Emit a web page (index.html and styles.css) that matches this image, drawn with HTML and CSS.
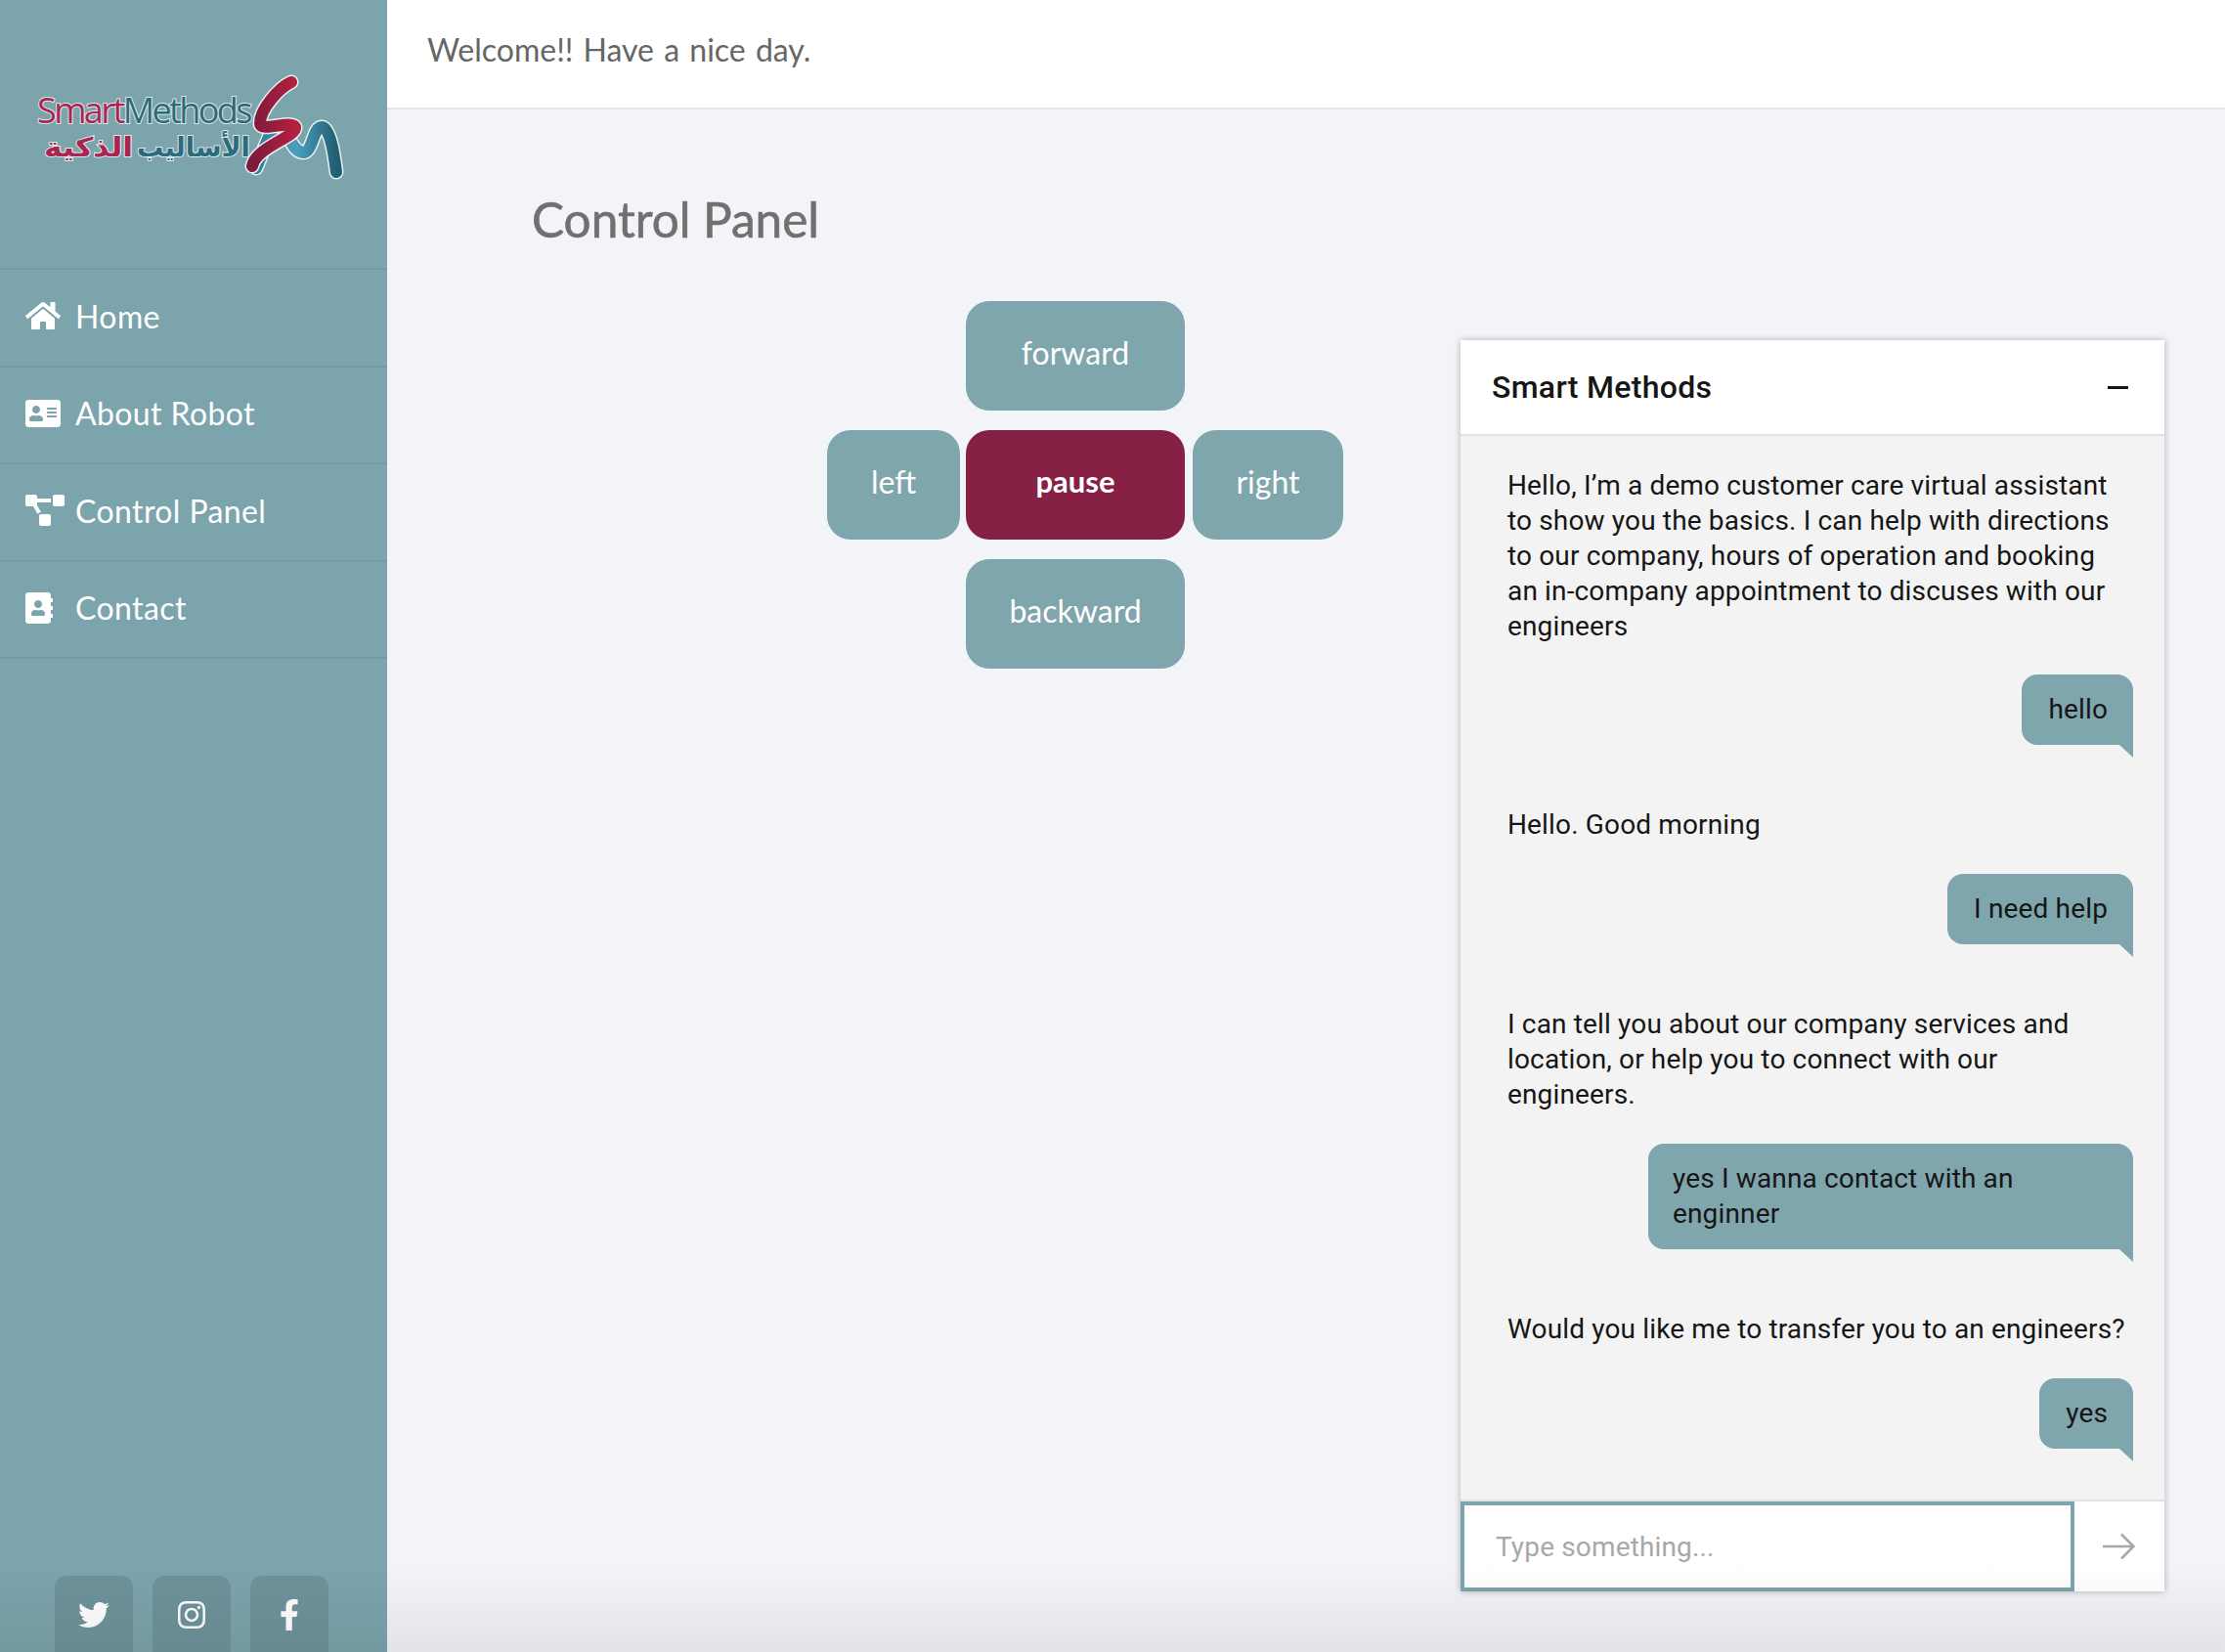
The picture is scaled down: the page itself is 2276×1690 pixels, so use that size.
FILE: index.html
```html
<!DOCTYPE html>
<html lang="en">
<head>
    <meta charset="UTF-8">
    <title>Control Panel</title>
    <link rel="stylesheet" href="styles.css">
</head>
<body>
    <div class="layout">
        <aside class="sidebar">
            <div class="logo">
                <svg width="396" height="274" viewBox="0 0 396 274">
                    <defs>
                        <linearGradient id="redRibbon" x1="0" y1="0" x2="1" y2="0">
                            <stop offset="0" stop-color="#7c1b3b"/>
                            <stop offset="1" stop-color="#b3213f"/>
                        </linearGradient>
                        <linearGradient id="tealRibbon" x1="0" y1="0" x2="1" y2="0">
                            <stop offset="0" stop-color="#2f7f9a"/>
                            <stop offset="0.5" stop-color="#4a9fbe"/>
                            <stop offset="1" stop-color="#215f73"/>
                        </linearGradient>
                    </defs>
                    <text class="logo-en" x="38" y="126"><tspan class="logo-pink">Smart</tspan><tspan class="logo-teal">Methods</tspan></text>
                    <text class="logo-ar logo-teal" x="140" y="160" text-anchor="end" direction="rtl">الأساليب</text>
                    <text class="logo-ar logo-pink" x="45" y="160" text-anchor="end" direction="rtl" textLength="91" lengthAdjust="spacingAndGlyphs">الذكية</text>
                    <path class="halo" d="M262 172 C270 155 276 130 284 130 C294 130 298 156 310 156 C320 156 320 130 329 130 C338 130 342 160 344 176"/>
                    <path class="teal" d="M262 172 C270 155 276 130 284 130 C294 130 298 156 310 156 C320 156 320 130 329 130 C338 130 342 160 344 176"/>
                    <path class="halo" d="M298 84 C285 90 266 112 266 126 C266 136 298 122 302 130 C304 140 262 150 258 170"/>
                    <path class="red" d="M298 84 C285 90 266 112 266 126 C266 136 298 122 302 130 C304 140 262 150 258 170"/>
                </svg>
            </div>

            <nav class="nav">
                <a class="nav-item" href="#">
                    <span class="nav-icon">
                        <svg width="36" height="32" viewBox="0 0 576 512"><path d="M280.37 148.26L96 300.11V464a16 16 0 0 0 16 16l112.06-.29a16 16 0 0 0 15.92-16V368a16 16 0 0 1 16-16h64a16 16 0 0 1 16 16v95.64a16 16 0 0 0 16 16.05L464 480a16 16 0 0 0 16-16V300L295.67 148.26a12.19 12.19 0 0 0-15.3 0zM571.6 251.47L488 182.56V44.05a12 12 0 0 0-12-12h-56a12 12 0 0 0-12 12v72.61L318.47 43a48 48 0 0 0-61 0L4.34 251.47a12 12 0 0 0-1.6 16.9l25.5 31A12 12 0 0 0 45.15 301l235.22-193.74a12.19 12.19 0 0 1 15.3 0L530.9 301a12 12 0 0 0 16.9-1.6l25.5-31a12 12 0 0 0-1.7-16.93z"/></svg>
                    </span>
                    Home
                </a>
                <a class="nav-item" href="#">
                    <span class="nav-icon">
                        <svg width="36" height="32" viewBox="0 0 576 512"><path d="M528 32H48C21.5 32 0 53.5 0 80v352c0 26.5 21.5 48 48 48h480c26.5 0 48-21.5 48-48V80c0-26.5-21.5-48-48-48zm-352 96c35.3 0 64 28.7 64 64s-28.7 64-64 64-64-28.7-64-64 28.7-64 64-64zm112 236.8c0 10.6-10 19.2-22.4 19.2H86.4C74 384 64 375.4 64 364.8v-19.2c0-31.8 30.1-57.6 67.2-57.6h5c12.3 5.1 25.7 8 39.8 8s27.6-2.9 39.8-8h5c37.1 0 67.2 25.8 67.2 57.6v19.2zM512 312c0 4.4-3.6 8-8 8H360c-4.4 0-8-3.6-8-8v-16c0-4.4 3.6-8 8-8h144c4.4 0 8 3.6 8 8v16zm0-64c0 4.4-3.6 8-8 8H360c-4.4 0-8-3.6-8-8v-16c0-4.4 3.6-8 8-8h144c4.4 0 8 3.6 8 8v16zm0-64c0 4.4-3.6 8-8 8H360c-4.4 0-8-3.6-8-8v-16c0-4.4 3.6-8 8-8h144c4.4 0 8 3.6 8 8v16z"/></svg>
                    </span>
                    About Robot
                </a>
                <a class="nav-item" href="#">
                    <span class="nav-icon">
                        <svg width="40" height="32" viewBox="0 0 640 512"><path d="M384 320H256c-17.67 0-32 14.33-32 32v128c0 17.67 14.33 32 32 32h128c17.67 0 32-14.33 32-32V352c0-17.67-14.33-32-32-32zM192 32c0-17.67-14.33-32-32-32H32C14.33 0 0 14.33 0 32v128c0 17.67 14.33 32 32 32h95.72l73.16 128.04C211.98 300.98 232.4 288 256 288h.28L192 175.51V128h224V64H192V32zM608 0H480c-17.67 0-32 14.33-32 32v128c0 17.67 14.33 32 32 32h128c17.67 0 32-14.33 32-32V32c0-17.67-14.33-32-32-32z"/></svg>
                    </span>
                    Control Panel
                </a>
                <a class="nav-item" href="#">
                    <span class="nav-icon">
                        <svg width="28" height="32" viewBox="0 0 448 512"><path d="M436 160c6.6 0 12-5.4 12-12v-40c0-6.6-5.4-12-12-12h-20V48c0-26.5-21.5-48-48-48H48C21.5 0 0 21.5 0 48v416c0 26.5 21.5 48 48 48h320c26.5 0 48-21.5 48-48v-48h20c6.6 0 12-5.4 12-12v-40c0-6.6-5.4-12-12-12h-20v-64h20c6.6 0 12-5.4 12-12v-40c0-6.6-5.4-12-12-12h-20v-64h20zm-228-32c35.3 0 64 28.7 64 64s-28.7 64-64 64-64-28.7-64-64 28.7-64 64-64zm112 236.8c0 10.6-10 19.2-22.4 19.2H118.4C106 384 96 375.4 96 364.8v-19.2c0-31.8 30.1-57.6 67.2-57.6h5c12.3 5.1 25.7 8 39.8 8s27.6-2.9 39.8-8h5c37.1 0 67.2 25.8 67.2 57.6v19.2z"/></svg>
                    </span>
                    Contact
                </a>
            </nav>

            <div class="social">
                <a class="social-item" href="#">
                    <svg width="32" height="32" viewBox="0 0 512 512"><path d="M459.37 151.716c.325 4.548.325 9.097.325 13.645 0 138.72-105.583 298.558-298.558 298.558-59.452 0-114.68-17.219-161.137-47.106 8.447.974 16.568 1.299 25.34 1.299 49.055 0 94.213-16.568 130.274-44.832-46.132-.975-84.792-31.188-98.112-72.772 6.498.974 12.995 1.624 19.818 1.624 9.421 0 18.843-1.3 27.614-3.573-48.081-9.747-84.143-51.98-84.143-102.985v-1.299c13.969 7.797 30.214 12.67 47.431 13.319-28.264-18.843-46.781-51.005-46.781-87.391 0-19.492 5.197-37.36 14.294-52.954 51.655 63.675 129.3 105.258 216.365 109.807-1.624-7.797-2.599-15.918-2.599-24.04 0-57.828 46.782-104.934 104.934-104.934 30.213 0 57.502 12.67 76.67 33.137 23.715-4.548 46.456-13.32 66.599-25.34-7.798 24.366-24.366 44.833-46.132 57.827 21.117-2.273 41.584-8.122 60.426-16.243-14.292 20.791-32.161 39.308-52.628 54.253z"/></svg>
                </a>
                <a class="social-item" href="#">
                    <svg width="32" height="32" viewBox="0 0 448 512"><path d="M224.1 141c-63.6 0-114.9 51.3-114.9 114.9s51.3 114.9 114.9 114.9S339 319.5 339 255.9 287.7 141 224.1 141zm0 189.6c-41.1 0-74.7-33.5-74.7-74.7s33.5-74.7 74.7-74.7 74.7 33.5 74.7 74.7-33.6 74.7-74.7 74.7zm146.4-194.3c0 14.9-12 26.8-26.8 26.8-14.9 0-26.8-12-26.8-26.8s12-26.8 26.8-26.8 26.8 12 26.8 26.8zm76.1 27.2c-1.7-35.9-9.9-67.7-36.2-93.9-26.2-26.2-58-34.4-93.9-36.2-37-2.1-147.9-2.1-184.9 0-35.8 1.7-67.6 9.9-93.9 36.1s-34.4 58-36.2 93.9c-2.1 37-2.1 147.9 0 184.9 1.7 35.9 9.9 67.7 36.2 93.9s58 34.4 93.9 36.2c37 2.1 147.9 2.1 184.9 0 35.9-1.7 67.7-9.9 93.9-36.2 26.2-26.2 34.4-58 36.2-93.9 2.1-37 2.1-147.8 0-184.8zM398.8 388c-7.8 19.6-22.9 34.7-42.6 42.6-29.5 11.7-99.5 9-132.1 9s-102.7 2.6-132.1-9c-19.6-7.8-34.7-22.9-42.6-42.6-11.7-29.5-9-99.5-9-132.1s-2.6-102.7 9-132.1c7.8-19.6 22.9-34.7 42.6-42.6 29.5-11.7 99.5-9 132.1-9s102.7-2.6 132.1 9c19.6 7.8 34.7 22.9 42.6 42.6 11.7 29.5 9 99.5 9 132.1s2.7 102.7-9 132.1z"/></svg>
                </a>
                <a class="social-item" href="#">
                    <svg width="20" height="32" viewBox="0 0 320 512"><path d="M279.14 288l14.22-92.66h-88.91v-60.13c0-25.35 12.42-50.06 52.24-50.06h40.42V6.26S260.43 0 225.36 0c-73.22 0-121.08 44.38-121.08 124.72v70.62H22.89V288h81.39v224h100.17V288z"/></svg>
                </a>
            </div>
        </aside>

        <div class="main">
            <header class="topbar">Welcome!! Have a nice day.</header>

            <section class="content">
                <h1 class="title">Control Panel</h1>

                <div class="panels">
                    <div class="pad">
                        <button class="pad-btn pad-forward">forward</button>
                        <button class="pad-btn pad-left">left</button>
                        <button class="pad-btn pad-pause">pause</button>
                        <button class="pad-btn pad-right">right</button>
                        <button class="pad-btn pad-backward">backward</button>
                    </div>

                    <div class="chat">
                        <div class="chat-head">
                            <span class="chat-title">Smart Methods</span>
                            <span class="chat-min"></span>
                        </div>
                        <div class="chat-body">
                            <p class="msg-bot">Hello, I’m a demo customer care virtual assistant<br>to show you the basics. I can help with directions<br>to our company, hours of operation and booking<br>an in-company appointment to discuses with our<br>engineers</p>
                            <p class="msg-user">hello</p>
                            <p class="msg-bot">Hello. Good morning</p>
                            <p class="msg-user">I need help</p>
                            <p class="msg-bot">I can tell you about our company services and<br>location, or help you to connect with our<br>engineers.</p>
                            <p class="msg-user msg-wide">yes I wanna contact with an<br>enginner</p>
                            <p class="msg-bot">Would you like me to transfer you to an engineers?</p>
                            <p class="msg-user">yes</p>
                        </div>
                        <div class="chat-foot">
                            <input class="chat-input" type="text" placeholder="Type something...">
                            <button class="chat-send">
                                <svg width="34" height="28" viewBox="0 0 34 28"><path d="M1 14H32M20 1.5L32.500 14L20 26.500"/></svg>
                            </button>
                        </div>
                    </div>
                </div>
            </section>
        </div>
    </div>
</body>
</html>
```

FILE: styles.css
```css
* {
    box-sizing: border-box;
}

body {
    margin: 0;
    height: 1690px;
    overflow: hidden;
    position: relative;
    font-family: 'Lato', sans-serif;
    background-color: #f3f4f8;
}

/* darker band along the bottom edge of the window */
body::after {
    content: "";
    position: absolute;
    left: 0;
    right: 0;
    bottom: 0;
    height: 90px;
    background: linear-gradient(rgba(0,0,0,0), rgba(0,0,0,0.065));
    pointer-events: none;
}

.layout {
    display: flex;
    height: 100%;
}

/* sidebar */
.sidebar {
    width: 396px;
    flex-shrink: 0;
    display: flex;
    flex-direction: column;
    background-color: #7ca4ac;
}

.logo {
    height: 274px;
}

.logo svg {
    display: block;
}

.halo,
.teal,
.red {
    fill: none;
    stroke-linecap: round;
    stroke-linejoin: round;
}

.halo {
    stroke: #e9f0f2;
    stroke-width: 15;
}

.teal {
    stroke: url(#tealRibbon);
    stroke-width: 12;
}

.red {
    stroke: url(#redRibbon);
    stroke-width: 12;
}

.logo-en {
    font-family: 'Open Sans', sans-serif;
    font-size: 36px;
    letter-spacing: -2.6px;
    paint-order: stroke;
    stroke: #dfe9eb;
    stroke-width: 2px;
}

.logo-ar {
    font-family: 'DejaVu Sans', sans-serif;
    font-size: 27px;
    font-weight: bold;
    paint-order: stroke;
    stroke: #dfe9eb;
    stroke-width: 2px;
}

.logo-pink {
    fill: #ab2550;
}

.logo-teal {
    fill: #2b6b7b;
}

.nav {
    display: flex;
    flex-direction: column;
}

.nav-item {
    display: flex;
    align-items: center;
    height: 99.5px;
    padding-left: 26px;
    padding-bottom: 3px;
    color: #fff;
    font-size: 32px;
    letter-spacing: 0.4px;
    text-decoration: none;
    border-top: 2px solid #749aa2;
}

.nav-item:last-child {
    border-bottom: 2px solid #749aa2;
    height: 101.5px;
}

.nav-icon {
    width: 51px;
    display: flex;
    align-items: center;
}

.nav-icon svg {
    fill: #fff;
}

.social {
    display: flex;
    gap: 20px;
    margin-top: auto;
    padding-left: 56px;
}

.social-item {
    width: 80px;
    height: 78px;
    display: flex;
    justify-content: center;
    padding-top: 24px;
    border-radius: 12px 12px 0 0;
    background-color: #6f939b;
}

.social-item svg {
    fill: #fff;
}

/* main column */
.main {
    flex: 1;
    min-width: 0;
}

.topbar {
    height: 112px;
    padding: 31px 0 0 41px;
    background-color: #fff;
    border-bottom: 2px solid #e3e5ea;
    color: #666;
    font-size: 32px;
    word-spacing: 2px;
}

.title {
    margin: 0;
    padding: 82px 0 0 148px;
    color: #707070;
    font-size: 49.5px;
    line-height: 60px;
    font-weight: 400;
    -webkit-text-stroke: 0.6px #707070;
}

.panels {
    display: flex;
    align-items: flex-start;
    padding: 0 62px 0 450px;
    justify-content: space-between;
    margin-top: 54px;
}

/* direction pad */
.pad {
    display: grid;
    grid-template-columns: 136px 224px 156px;
    grid-auto-rows: 112px;
    column-gap: 6px;
    row-gap: 20px;
}

.pad-btn {
    border: none;
    border-radius: 24px;
    background-color: #7fa5ad;
    color: #fff;
    font-family: inherit;
    font-size: 32px;
    padding: 0 0 8px;
    cursor: pointer;
}

.pad-forward {
    grid-column: 2;
}

.pad-left {
    grid-column: 1;
}

.pad-pause {
    background-color: #862044;
    font-weight: bold;
    font-size: 31px;
}

.pad-right {
    margin-left: 2px;
}

.pad-backward {
    grid-column: 2;
}

/* chat card */
.chat {
    width: 720px;
    margin-top: 40px;
    box-shadow: 0 0 7px rgba(0,0,0,0.28);
    background-color: #f3f3f3;
}

.chat-head {
    height: 98px;
    padding: 0 37px 0 32px;
    display: flex;
    justify-content: space-between;
    align-items: center;
    background-color: #fff;
    border-bottom: 2px solid #e2e2e2;
}

.chat-title {
    color: #161616;
    font-family: 'Roboto', sans-serif;
    font-size: 32px;
    letter-spacing: 0.3px;
    font-weight: 500;
}

.chat-min {
    width: 21px;
    height: 3px;
    background-color: #161616;
}

.chat-body {
    height: 1088px;
    padding: 33px 32px 0 48px;
    display: flex;
    flex-direction: column;
    font-family: 'Roboto', sans-serif;
    font-size: 28px;
    letter-spacing: 0.15px;
    line-height: 36px;
    color: #161616;
}

.chat-body p {
    margin: 0;
}

.msg-bot {
    margin-bottom: 32px !important;
    white-space: nowrap;
}

.msg-bot:first-child {
    margin-bottom: 31px !important;
}

.msg-user {
    align-self: flex-end;
    position: relative;
    margin-bottom: 64px !important;
    padding: 18px 26px 18px 27px;
    background-color: #7fa5ad;
    border-radius: 16px 16px 0 16px;
}

.msg-user::after {
    content: "";
    position: absolute;
    right: 0;
    top: 100%;
    border-top: 13px solid #7fa5ad;
    border-left: 14px solid transparent;
}

.msg-wide {
    width: 496px;
    padding-left: 25px;
}

.chat-foot {
    height: 94px;
    display: flex;
    background-color: #fff;
    border-top: 2px solid #e2e2e2;
}

.chat-input {
    width: 628px;
    height: 92px;
    padding: 0 32px;
    border: 4px solid #7ca4ac;
    outline: none;
    font-family: 'Roboto', sans-serif;
    font-size: 28px;
    letter-spacing: 0.15px;
    background-color: #fff;
}

.chat-input::placeholder {
    color: #a8a8a8;
}

.chat-send {
    flex: 1;
    border: none;
    background: none;
    padding: 0 0 0 28px;
    text-align: left;
    cursor: pointer;
}

.chat-send svg {
    display: block;
    fill: none;
    stroke: #a8a8a8;
    stroke-width: 2.5;
}
```
